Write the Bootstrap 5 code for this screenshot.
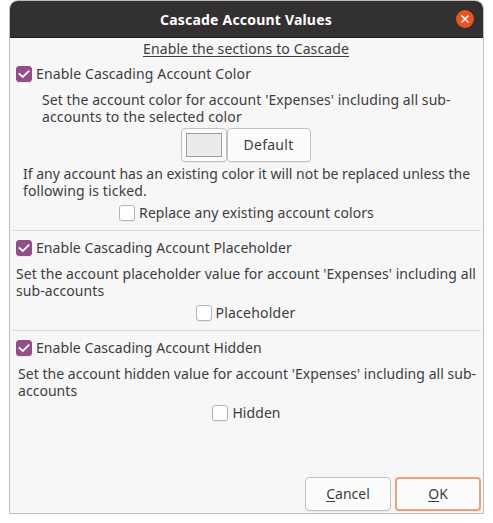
<!DOCTYPE html>
<html lang="en">
<head>
<meta charset="utf-8">
<meta name="viewport" content="width=device-width, initial-scale=1">
<title>Cascade Account Values</title>
<link href="https://cdn.jsdelivr.net/npm/bootstrap@5.3.0/dist/css/bootstrap.min.css" rel="stylesheet">
<style>
body{font:14px/17px "Noto Sans",sans-serif;color:#3d3d3d;background:#fff;letter-spacing:.06px;overflow:hidden}
.dialog-window{width:475px;height:514px;margin-left:9px;border:1px solid #bfbfbf;border-radius:9px 9px 0 0;background:#f7f7f7;overflow:hidden}
.title-bar{height:37px;background:#323030;border-bottom:1px solid #1e1c1c;color:#fff;font-weight:700;letter-spacing:.2px;padding-right:1px}
.close-btn{width:18px;height:18px;top:9px;right:9px;background:#e95420;border-radius:50%}
.heading{padding-top:2px;padding-right:1px;letter-spacing:.12px}
.heading span{border-bottom:1px solid #3d3d3d;display:inline-block;height:17px}
.opt{height:17px;gap:4px;white-space:nowrap}
.form-check-input.tick{width:16px;height:16px;margin:1px 0 0;border:1px solid #b5b5b5;border-radius:3px;background-color:#fff;box-shadow:0 1px 1px rgba(0,0,0,.06);flex:none}
.form-check-input.tick:checked{background-color:#924d8b;border-color:#924d8b;background-size:16px 16px;background-position:-1px -1px;background-image:url("data:image/svg+xml,%3Csvg xmlns='http://www.w3.org/2000/svg' viewBox='0 0 16 16'%3E%3Cpath d='M2.8 7.3 6.8 11 13.3 4.7' fill='none' stroke='%23fff' stroke-width='1.8'/%3E%3C/svg%3E")}
.section{padding:8px 6px 0;height:100px;border-top:1px solid #dcdcdc;margin:0 2px}
.section .opt:first-child{margin-left:-2px}
.section-color{height:165px;margin-top:8px;border-top:0;padding-top:0}
.push-btn{--bs-btn-bg:#fcfcfc;--bs-btn-color:#3d3d3d;--bs-btn-border-color:#c2c2c2;--bs-btn-font-size:14px;--bs-btn-line-height:17px;--bs-btn-padding-x:0;--bs-btn-padding-y:0;--bs-btn-border-radius:4px;height:34px;box-shadow:0 1px 1px rgba(0,0,0,.06)}
.push-btn .lbl{display:block;margin-top:-1px}
.push-btn u{text-underline-offset:2px}
.push-wide{width:86px}
.default-ring{border:2px solid #eba083}
.push-swatch{width:46px}
.push-default{width:84px;letter-spacing:.27px}
.swatch{width:36px;height:24px;background:#ebebe9;border:1px solid #9b9b9b}
.desc{padding-top:9px;letter-spacing:.073px;margin-left:-2px}
.desc-hidden{margin-left:0;letter-spacing:.04px}
.desc-color{padding:9px 0 0 24px;letter-spacing:.08px}
.line-end{letter-spacing:.13px}
.btn-line{margin-top:3px;padding-right:2px}
.note{padding:3px 0 0 5px;letter-spacing:.01px}
.value-opt{margin-top:5px}
.loose{letter-spacing:.22px;padding-right:2px}
.actions{gap:4px;padding:0 2px 2px}
</style>
</head>
<body>
<main class="dialog-window d-flex flex-column">
  <header class="title-bar position-relative d-flex align-items-center justify-content-center flex-shrink-0">
    <span>Cascade Account Values</span>
    <svg class="close-btn position-absolute" viewBox="0 0 18 18" role="img" aria-label="Close"><path d="M5.5 5.5 12.5 12.5M12.5 5.5 5.5 12.5" stroke="#fff" stroke-width="1.5"/></svg>
  </header>
  <p class="heading text-center mb-0"><span>Enable the sections to Cascade</span></p>
  <section class="section section-color">
    <label class="opt d-flex line-end"><input class="form-check-input tick" type="checkbox" checked><span>Enable Cascading Account Color</span></label>
    <p class="desc-color mb-0 text-nowrap">Set the account color for account 'Expenses' including all sub-<br><span class="line-end">accounts to the selected color</span></p>
    <div class="d-flex justify-content-center btn-line">
      <button class="btn push-btn push-swatch d-flex align-items-center justify-content-center" type="button" aria-label="Color"><span class="swatch"></span></button>
      <button class="btn push-btn push-default" type="button"><span class="lbl">Default</span></button>
    </div>
    <p class="note mb-0 text-nowrap">If any account has an existing color it will not be replaced unless the<br><span class="line-end">following is ticked.</span></p>
    <label class="opt d-flex justify-content-center value-opt"><input class="form-check-input tick" type="checkbox"><span>Replace any existing account colors</span></label>
  </section>
  <section class="section">
    <label class="opt d-flex"><input class="form-check-input tick" type="checkbox" checked><span>Enable Cascading Account Placeholder</span></label>
    <p class="desc mb-0 text-nowrap">Set the account placeholder value for account 'Expenses' including all<br>sub-accounts</p>
    <label class="opt d-flex justify-content-center value-opt loose"><input class="form-check-input tick" type="checkbox"><span>Placeholder</span></label>
  </section>
  <section class="section">
    <label class="opt d-flex"><input class="form-check-input tick" type="checkbox" checked><span>Enable Cascading Account Hidden</span></label>
    <p class="desc desc-hidden mb-0 text-nowrap">Set the account hidden value for account 'Expenses' including all sub-<br>accounts</p>
    <label class="opt d-flex justify-content-center value-opt"><input class="form-check-input tick" type="checkbox"><span>Hidden</span></label>
  </section>
  <footer class="d-flex justify-content-end mt-auto actions">
    <button class="btn push-btn push-wide" type="button"><span class="lbl"><u>C</u>ancel</span></button>
    <button class="btn push-btn push-wide default-ring" type="button"><span class="lbl"><u>O</u>K</span></button>
  </footer>
</main>
<script src="https://cdn.jsdelivr.net/npm/bootstrap@5.3.0/dist/js/bootstrap.bundle.min.js"></script>
</body>
</html>
